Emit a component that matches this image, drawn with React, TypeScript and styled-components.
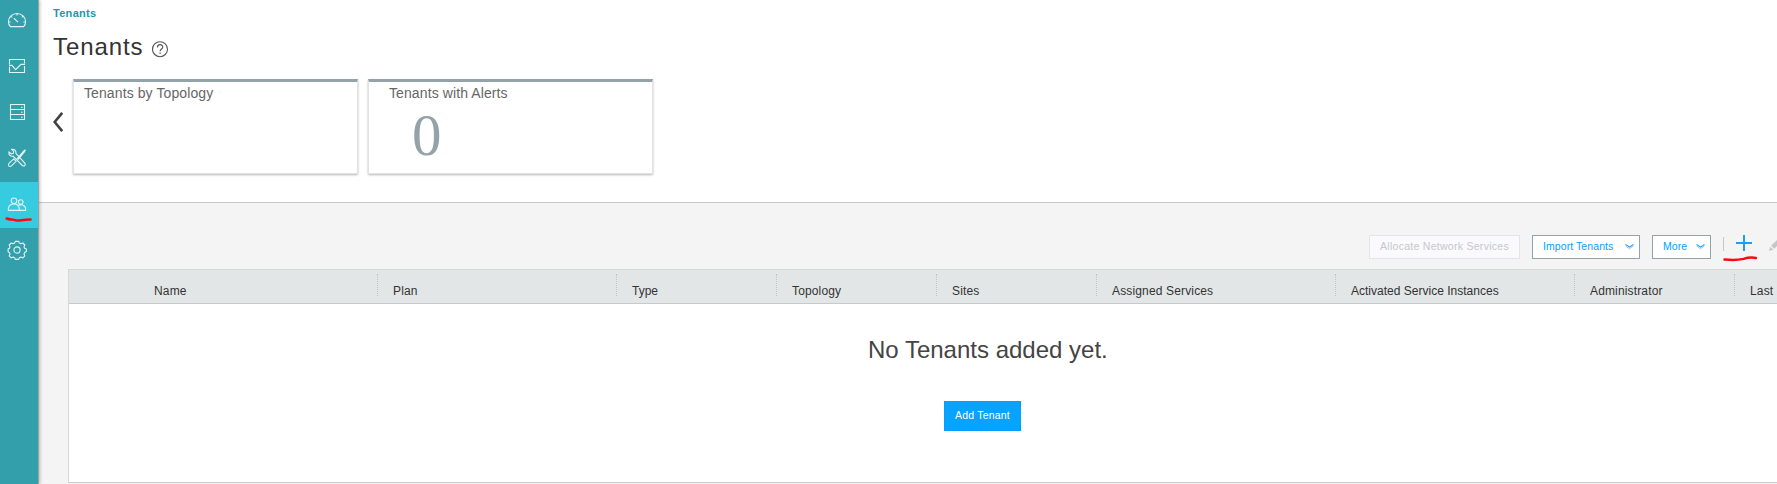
import React from "react";
import styled, { createGlobalStyle, css } from "styled-components";

const Global = createGlobalStyle`
  * { box-sizing: border-box; }
  html, body { margin: 0; overflow: hidden; }
  body { font-family: "Liberation Sans", Arial, sans-serif; background: #fff; }
`;

const Shell = styled.div`
  display: flex;
  width: 1777px;
  height: 484px;
  overflow: hidden;
`;

const Sidebar = styled.nav`
  flex: none;
  width: 39px;
  height: 484px;
  background: #329fab;
  border-right: 1px solid #9f9fa3;
  box-shadow: 1px 0 3px rgba(0, 0, 0, 0.25);
  z-index: 1;
`;

const NavList = styled.div`
  display: flex;
  flex-direction: column;
  margin-top: -2px;
`;

const NavItem = styled.a<{ $active?: boolean }>`
  position: relative;
  height: 46px;
  padding: 12px 0 0 7px;
  background: ${(p) => (p.$active ? "#36cbde" : "transparent")};
`;

const Icon = styled.svg`
  display: block;
  fill: none;
  stroke: #e4f6f8;
  stroke-width: 1.1;
  overflow: visible;
`;

const Scribble = styled.svg<{ $left: number; $top: number }>`
  position: absolute;
  left: ${(p) => p.$left}px;
  top: ${(p) => p.$top}px;
  fill: none;
  stroke: #f80a10;
  stroke-width: 2.5;
  stroke-linecap: round;
  overflow: visible;
`;

const Main = styled.main`
  flex: 1;
  min-width: 0;
  display: flex;
  flex-direction: column;
`;

const Summary = styled.section`
  flex: none;
  height: 203px;
  border-bottom: 1px solid #c6c8c8;
  padding: 6px 0 0 14px;
`;

const Breadcrumb = styled.div`
  height: 15px;
  font-size: 11px;
  line-height: 15px;
  font-weight: bold;
  letter-spacing: 0.3px;
  color: #1a9aad;
`;

const TitleRow = styled.div`
  display: flex;
  height: 58px;
  padding-top: 12px;
`;

const Title = styled.h1`
  margin: 0;
  width: 99px;
  font-size: 24px;
  line-height: 28px;
  font-weight: normal;
  letter-spacing: 0.9px;
  color: #333;
`;

const HelpIcon = styled.svg`
  margin-top: 8px;
  fill: none;
  stroke: #555;
  stroke-width: 1.1;
`;

const CardRow = styled.div`
  display: flex;
  gap: 10px;
`;

const Prev = styled.svg`
  flex: none;
  margin: 32px 0 0 0;
  fill: none;
  stroke: #414042;
  stroke-width: 2.6;
`;

const Card = styled.article<{ $indent: number }>`
  width: 285px;
  height: 95px;
  border: 1px solid #e1e3e4;
  border-top: 3px solid #94a3a9;
  box-shadow: 0 1px 2px rgba(0, 0, 0, 0.28);
  padding: 2px 0 0 ${(p) => p.$indent}px;
`;

const CardTitle = styled.div`
  font-size: 14px;
  line-height: 18px;
  letter-spacing: 0.1px;
  color: #666;
`;

const CardValue = styled.div`
  padding-left: 23px;
  margin-top: 3px;
  font-family: "Liberation Serif", "Times New Roman", serif;
  font-size: 59px;
  line-height: 60px;
  color: #94a3a9;
`;

const Content = styled.section`
  flex: 1;
  background: #f4f4f4;
  padding: 32px 0 0 29px;
`;

const Toolbar = styled.div`
  display: flex;
  height: 34px;
  padding-left: 1301px;
`;

const Button = styled.button<{ $width: number; $disabled?: boolean }>`
  flex: none;
  display: flex;
  justify-content: space-between;
  width: ${(p) => p.$width}px;
  height: 24px;
  margin-right: 12px;
  padding: 0 5px 0 10px;
  border: 1px solid #94a3a9;
  background: #fff;
  color: #049fff;
  font: 10.5px/20px "Liberation Sans", Arial, sans-serif;
  letter-spacing: 0.08px;
  white-space: nowrap;
  ${(p) =>
    p.$disabled &&
    css`
      border-color: #e4e5e6;
      background: #fafafc;
      color: #c5c7cb;
      letter-spacing: 0.28px;
    `}
`;

const Caret = styled.svg`
  margin-top: 6px;
  fill: none;
`;

const Divider = styled.span`
  flex: none;
  width: 1px;
  height: 14px;
  margin-top: 2px;
  background: #c5c7c8;
`;

const AddAction = styled.span`
  position: relative;
  flex: none;
  width: 45px;
  padding-left: 12px;
`;

const EditIcon = styled.svg`
  flex: none;
  fill: #c4c6c7;
`;

const Table = styled.div`
  height: 214px;
  border: 1px solid #d6d8d8;
  border-right: 0;
  border-bottom-color: #c8caca;
  background: #fff;
  overflow: hidden;
`;

const HeaderRow = styled.div`
  display: flex;
  height: 34px;
  padding-top: 4px;
  background: #e2e6e7;
  border-bottom: 1px solid #c8caca;
`;

const HeaderCell = styled.div<{ $width: number; $first?: boolean; $tracking?: number }>`
  flex: none;
  width: ${(p) => p.$width}px;
  height: 22px;
  padding-left: ${(p) => (p.$first ? 85 : 15)}px;
  border-left: ${(p) => (p.$first ? "0" : "1px dotted #c0c4c6")};
  font-size: 12px;
  line-height: 35px;
  letter-spacing: ${(p) => p.$tracking ?? 0.15}px;
  white-space: nowrap;
  color: #333;
`;

const Empty = styled.div`
  display: flex;
  flex-direction: column;
  align-items: flex-start;
`;

const EmptyText = styled.div`
  margin: 32px 0 0 799px;
  font-size: 24px;
  line-height: 28px;
  color: #444;
  white-space: nowrap;
`;

const Primary = styled.button`
  width: 77px;
  height: 30px;
  margin: 37px 0 0 875px;
  padding: 0 0 2px;
  border: 1px solid #049fff;
  background: #07a3ff;
  color: #fff;
  font: 10.5px/27px "Liberation Sans", Arial, sans-serif;
  letter-spacing: 0.2px;
  white-space: nowrap;
`;

const icons = [
  <>
    <path d="M3.4 16.6C2 15.2 1.4 13.6 1.4 11.8a8.6 8.3 0 0 1 17.2 0c0 1.8-.6 3.4-2 4.8z" />
    <path d="M6.8 8.2l4.2 4M10 3.8v1.8M1.6 12h2M16.4 12h2M4 6.4l1.2 1M16 6.4l-1.2 1" />
  </>,
  <>
    <path d="M2.5 8.5v-5h15v4M2.5 10.5v6h15V10" />
    <path d="M2 9.4h3l3.6 4.2L14 8.4h4" />
  </>,
  <>
    <path d="M3.5 2.5h14v15h-14zM3.5 7.5h14M3.5 12.5h14" />
    <path d="M14 5.2h1.6M14 10.2h1.6M14 15.2h1.6" />
  </>,
  <>
    <path d="M1.9 18.1q-1.1-1.6.3-2.9L6.7 10.9l2.4 2.4-4.4 4.3Q3.2 19 1.9 18.1zM9.8 11.2l6.8-8L18.4 1.8l-.9 2L11 11.6" />
    <path d="M2 4l2.3 2 2-.6.4-2-2-2c2.6-.6 4.8 1.3 4.2 4l8.9 9.7c1.4 1.9-.7 3.8-2.4 2.4L6 8.2C3.2 8.6 1.3 6.6 2 4z" />
  </>,
  <>
    <circle cx="7" cy="6.8" r="2.8" />
    <path d="M1.4 16.4v-2.2C1.9 11.3 4.1 10 7 10s4.6 1.2 5.2 4v2.4z" />
    <circle cx="13.7" cy="8" r="2.3" />
    <path d="M11.6 11.4c3.4-1.4 6.3-.1 7 2.8v2.2h-6.4" />
  </>,
  <>
    <path
      strokeLinejoin="round"
      d="M8.3 1.4h3.4l.7 1.7 1.5.7 1.9-.8 2 2-.8 1.9.6 1.4 1.8.7v2.6l-1.8 1-.6 1.4.8 1.9-2 2-1.9-.8-1.5.7-.7 1.6H8.3l-.8-1.6-1.4-.7-1.9.8-2-2 .8-1.9-.6-1.4-1.3-.9V9l1.4-.8.5-1.3L2.2 5l2-2 1.9.8 1.4-.7z"
    />
    <circle cx="10" cy="10" r="3.1" />
  </>,
];

const columns = [
  { label: "Name", width: 308 },
  { label: "Plan", width: 239 },
  { label: "Type", width: 160, tracking: 0 },
  { label: "Topology", width: 160 },
  { label: "Sites", width: 160 },
  { label: "Assigned Services", width: 239 },
  { label: "Activated Service Instances", width: 239, tracking: 0.01 },
  { label: "Administrator", width: 160 },
  { label: "Last", width: 160 },
];

const CaretIcon = () => (
  <Caret width="9" height="8" viewBox="0 0 9 8">
    <path d="M.5 4L4.5 6.8 8.5 4" stroke="#b5c3ca" />
    <path d="M.5 2.4L4.5 5.2 8.5 2.4" stroke="#049fff" strokeWidth="1.1" />
  </Caret>
);

export default function App() {
  return (
    <>
      <Global />
      <Shell>
        <Sidebar>
          <NavList>
            {icons.map((icon, i) => (
              <NavItem key={i} $active={i === 4}>
                <Icon width="20" height="20" viewBox="0 0 20 20">
                  {icon}
                </Icon>
                {i === 4 && (
                  <Scribble $left={6} $top={35} width="26" height="5">
                    <path d="M.7 1.5C4 2.8 7 2.2 10 3.4c4 .9 5-.8 14.5-.8" />
                  </Scribble>
                )}
              </NavItem>
            ))}
          </NavList>
        </Sidebar>
        <Main>
          <Summary>
            <Breadcrumb>Tenants</Breadcrumb>
            <TitleRow>
              <Title>Tenants</Title>
              <HelpIcon width="17" height="17" viewBox="0 0 17 17">
                <circle cx="8" cy="8.2" r="7.5" />
                <path d="M5.4 6.4c0-3.7 5.4-3.5 5.4-.4 0 2-2.7 2-2.7 4.3M8.1 11.6v1.4" />
              </HelpIcon>
            </TitleRow>
            <CardRow>
              <Prev width="10" height="22" viewBox="0 0 10 22">
                <path d="M9.2 1.8L1.7 11l7.5 9.2" />
              </Prev>
              <Card $indent={10}>
                <CardTitle>Tenants by Topology</CardTitle>
              </Card>
              <Card $indent={20}>
                <CardTitle>Tenants with Alerts</CardTitle>
                <CardValue>0</CardValue>
              </Card>
            </CardRow>
          </Summary>
          <Content>
            <Toolbar>
              <Button $width={151} $disabled>
                Allocate Network Services
              </Button>
              <Button $width={108}>
                Import Tenants
                <CaretIcon />
              </Button>
              <Button $width={59}>
                More
                <CaretIcon />
              </Button>
              <Divider />
              <AddAction>
                <svg width="16" height="16" viewBox="0 0 16 16" stroke="#1b9df5" strokeWidth="2">
                  <path d="M8 0v16M0 8h16" />
                </svg>
                <Scribble $left={0} $top={21} width="33" height="6">
                  <path d="M.5 3.5c8 .8 14 .5 19-.6 5-1.6 8-1.6 12.5-1" />
                </Scribble>
              </AddAction>
              <EditIcon width="16" height="16" viewBox="0 0 16 16">
                <path d="M0 16l1.2-4.3 3.1 3.1zM2.2 10.7l7-7 3.1 3.1-7 7z" />
              </EditIcon>
            </Toolbar>
            <Table>
              <HeaderRow>
                {columns.map((c, i) => (
                  <HeaderCell key={c.label} $width={c.width} $first={i === 0} $tracking={c.tracking}>
                    {c.label}
                  </HeaderCell>
                ))}
              </HeaderRow>
              <Empty>
                <EmptyText>No Tenants added yet.</EmptyText>
                <Primary>Add Tenant</Primary>
              </Empty>
            </Table>
          </Content>
        </Main>
      </Shell>
    </>
  );
}
